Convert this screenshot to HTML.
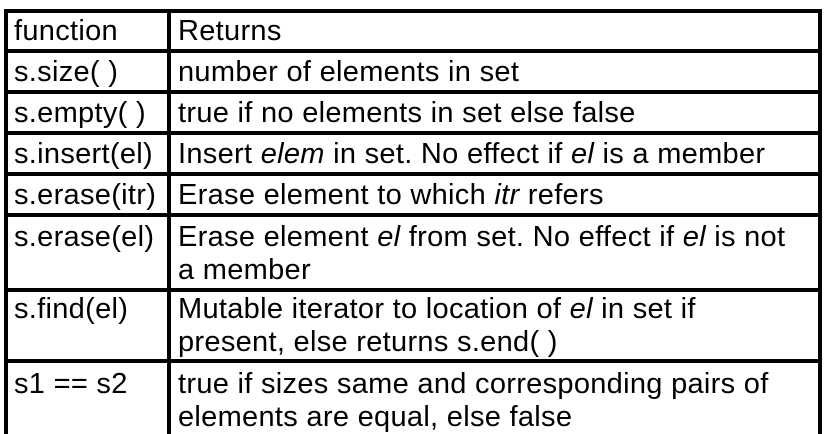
<!DOCTYPE html>
<html><head><style>
body{margin:0;width:828px;height:434px;background:#fff;position:relative;overflow:hidden;font-family:"Liberation Sans",Arial,sans-serif;font-size:29px;color:#000;letter-spacing:0.3px}
.h{position:absolute;left:4px;width:818px;height:4px;background:#000}
.v{position:absolute;top:9px;bottom:0;width:4px;background:#000}
.t{position:absolute;line-height:33px;white-space:nowrap}
.a{left:14px}.b{left:178px}
</style></head><body>
<div class="h" style="top:9px"></div>
<div class="h" style="top:49px"></div>
<div class="h" style="top:90px"></div>
<div class="h" style="top:131px"></div>
<div class="h" style="top:172px"></div>
<div class="h" style="top:213px"></div>
<div class="h" style="top:288px"></div>
<div class="h" style="top:359px"></div>
<div class="v" style="left:4px"></div>
<div class="v" style="left:167px"></div>
<div class="v" style="left:818px"></div>

<div class="t a" style="top:15px">function</div><div class="t b" style="top:15px">Returns</div>
<div class="t a" style="top:56px">s.size( )</div><div class="t b" style="top:56px">number of elements in set</div>
<div class="t a" style="top:97px">s.empty( )</div><div class="t b" style="top:97px">true if no elements in set else false</div>
<div class="t a" style="top:138px">s.insert(el)</div><div class="t b" style="top:138px">Insert <i>elem</i> in set. No effect if <i>el</i> is a member</div>
<div class="t a" style="top:179px">s.erase(itr)</div><div class="t b" style="top:179px">Erase element to which <i>itr</i> refers</div>
<div class="t a" style="top:221px">s.erase(el)</div><div class="t b" style="top:221px">Erase element <i>el</i> from set. No effect if <i>el</i> is not<br>a member</div>
<div class="t a" style="top:293px">s.find(el)</div><div class="t b" style="top:293px">Mutable iterator to location of <i>el</i> in set if<br>present, else returns s.end( )</div>
<div class="t a" style="top:368px">s1 == s2</div><div class="t b" style="top:368px">true if sizes same and corresponding pairs of<br>elements are equal, else false</div>
</body></html>
